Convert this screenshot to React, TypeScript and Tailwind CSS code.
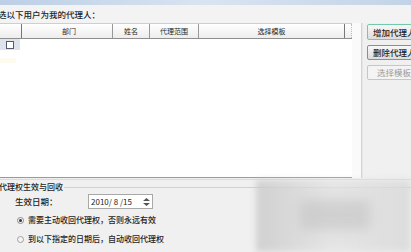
import React from "react";

const font = { fontFamily: '"Noto Sans CJK SC", "Noto Sans", sans-serif' };

export default function App() {
  return (
    <div
      className="relative w-[411px] h-[252px] overflow-hidden bg-[#f0f0f0] text-[#1e1e1e]"
      style={font}
    >
      {/* title strip */}
      <div className="h-[5px] bg-gradient-to-r from-[#bccfe6] via-[#d9e4f1] to-[#c3d3e7]" />
      {/* label */}
      <div className="h-[18px] flex items-center -ml-[2px] text-[8.5px] leading-none font-medium bg-[#f3f3f3]">
        选以下用户为我的代理人：
      </div>

      {/* main area */}
      <div className="flex h-[155px]">
        {/* table */}
        <div className="w-[352px] bg-white flex flex-col border-b border-[#9a9a9a]">
          <div className="flex h-[16px] border-t border-[#cfcfcf] border-b border-b-[#8f8f8f] bg-gradient-to-b from-white to-[#ededed] text-[7px] leading-none">
            <div className="w-[22px] border-r border-[#777]" />
            <div className="w-[91px] border-r border-[#999] flex items-center justify-center pl-[4px]">部门</div>
            <div className="w-[37px] border-r border-[#999] flex items-center justify-center">姓名</div>
            <div className="w-[49px] border-r border-[#999] flex items-center justify-center">代理范围</div>
            <div className="w-[146px] border-r border-[#777] flex items-center justify-center">选择模板</div>
            <div className="w-[7px] border-r border-dotted border-[#bbb]" />
          </div>
          <div className="flex h-[11px]">
            <div className="w-[20px] bg-[#dfe3ec] flex items-center justify-center">
              <div className="w-[8px] h-[8px] border border-[#555a70] bg-white" />
            </div>
          </div>
          <div className="w-[16px] h-[5px] bg-[#fdfbf0] mt-[8px]" />
          <div className="flex-1" />
        </div>
        {/* right panel */}
        <div className="flex-1 flex">
          <div className="w-[10px] bg-[#fafafa] border-r border-[#d4d4d4]" />
          <div className="flex-1 flex flex-col gap-[5px] pl-[4px] pt-[1px] overflow-hidden border-l border-[#e6e6e6]">
            <div className="w-[60px] h-[16px] shrink-0 rounded-[2px] border border-[#74c9a9] bg-gradient-to-b from-[#f8f8f8] to-[#dcdcdc] text-[8.5px] leading-none flex items-center pl-[5px] whitespace-nowrap font-medium">
              增加代理人
            </div>
            <div className="w-[60px] h-[15px] shrink-0 rounded-[2px] border border-[#8d8d8d] bg-gradient-to-b from-[#f8f8f8] to-[#dcdcdc] text-[8.5px] leading-none flex items-center pl-[5px] whitespace-nowrap font-medium">
              删除代理人
            </div>
            <div className="w-[60px] h-[15px] shrink-0 rounded-[2px] border border-[#c6c6c6] bg-[#f4f4f4] text-[8.5px] leading-none flex items-center pl-[9px] whitespace-nowrap text-[#9a9a9a]">
              选择模板
            </div>
          </div>
        </div>
      </div>

      {/* bottom group */}
      <div className="border-t border-[#dcdcdc] mt-[1px] pt-[2px]">
        <div className="flex items-center h-[9px] -ml-[1px]">
          <span className="text-[8px] leading-none font-medium">代理权生效与回收</span>
          <div className="flex-1 border-t border-[#d0d0d0] ml-[1px] mt-[1px]" />
        </div>
        <div className="flex items-center mt-[3px] h-[15px]">
          <span className="ml-[15px] w-[73px] text-[8.5px] leading-none font-medium">生效日期：</span>
          <div className="w-[65px] h-[15px] border border-[#a8a8a8] bg-white flex items-center">
            <span className="ml-[2px] text-[8px] leading-none">2010/ 8 /15</span>
            <div className="ml-auto mr-[1px] w-[9px] h-[11px] flex flex-col items-center justify-center gap-[2px]">
              <svg width="7" height="3" viewBox="0 0 7 3"><path d="M0 3 L3.5 0 L7 3Z" fill="#555" /></svg>
              <svg width="7" height="3" viewBox="0 0 7 3"><path d="M0 0 L3.5 3 L7 0Z" fill="#555" /></svg>
            </div>
          </div>
        </div>
        <div className="flex items-center mt-[6px] h-[10px]">
          <div className="ml-[17px] w-[7px] h-[7px] rounded-full border border-[#8a8a8a] bg-[#f4f4f4] flex items-center justify-center">
            <div className="w-[3px] h-[3px] rounded-full bg-[#333]" />
          </div>
          <span className="ml-[4px] text-[8px] leading-none font-medium">需要主动收回代理权，否则永远有效</span>
        </div>
        <div className="flex items-center mt-[9px] h-[10px]">
          <div className="ml-[17px] w-[7px] h-[7px] rounded-full border border-[#a0a0a0] bg-[#f4f4f4]" />
          <span className="ml-[4px] text-[8px] leading-none font-medium">到以下指定的日期后，自动收回代理权</span>
        </div>
      </div>

      {/* blurred watermark overlay */}
      <div className="absolute left-[256px] top-[180px] w-[155px] h-[72px] bg-gradient-to-r from-[#c9c9c9] via-[#e3e3e3] to-[#d8d8d8] blur-[3px] opacity-80" />
      <div className="absolute left-[300px] top-[200px] w-[70px] h-[30px] bg-[#bdbdbd] blur-[6px] opacity-50" />
    </div>
  );
}
